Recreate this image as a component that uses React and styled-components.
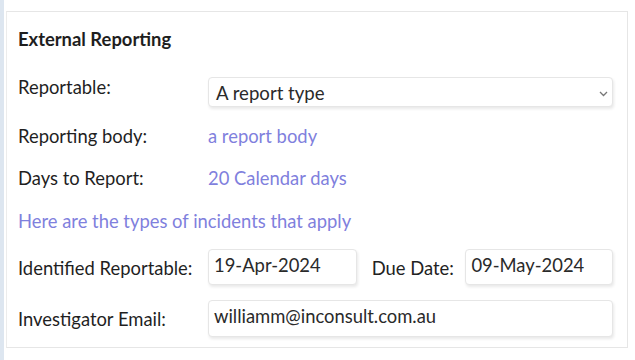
import React from 'react'
import styled, { createGlobalStyle } from 'styled-components'

const GlobalStyle = createGlobalStyle`
  html, body {
    margin: 0;
    padding: 0;
    background: #ffffff;
  }
  body {
    font-family: Lato, "Open Sans", sans-serif;
    color: #222222;
  }
`

const Page = styled.div`
  display: flex;
  width: 635px;
  height: 360px;
  overflow: hidden;
`

const SideStrip = styled.div`
  width: 4px;
  flex: none;
  background: #dde6f0;
`

const Panel = styled.section`
  box-sizing: border-box;
  width: 622px;
  height: 337px;
  margin: 11px 0 0 2px;
  padding: 17px 14px 0 11px;
  border: 1px solid #e6e6e6;
  border-left-color: #ececec;
`

const Heading = styled.h3`
  margin: 0 0 28px;
  font-size: 18.4px;
  line-height: 20px;
  font-weight: 700;
  color: #1e1e1e;
`

const Row = styled.div`
  display: flex;
  align-items: flex-start;
  height: ${p => p.h}px;
`

const Label = styled.div`
  width: 190px;
  flex: none;
  padding-top: ${p => p.top || 0}px;
  font-size: 18.4px;
  line-height: 20px;
  color: #1f1f1f;
`

const Value = styled.div`
  padding-top: ${p => p.top || 0}px;
  font-size: 18.4px;
  line-height: 20px;
  color: #7f80dd;
`

const Note = styled.div`
  padding-top: 8px;
  font-size: 18.4px;
  line-height: 20px;
  color: #7f80dd;
`

const SelectBox = styled.div`
  box-sizing: border-box;
  width: 406px;
  height: 30px;
  display: flex;
  align-items: center;
  justify-content: space-between;
  padding: 1px 4px 0 7px;
  border: 1px solid #e6e6e6;
  border-radius: 4px;
  box-shadow: 1px 2px 3px rgba(0, 0, 0, 0.09);
  font-size: 18.6px;
  color: #2a2a2a;
  background: #fff;
`

const Chevron = styled.svg`
  width: 9px;
  height: 6px;
  margin-top: 2px;
`

const Field = styled.div`
  box-sizing: border-box;
  width: ${p => p.w}px;
  height: ${p => p.h || 36}px;
  padding: 5px 5px 0 5px;
  border: 1px solid #e6e6e6;
  border-radius: 4px;
  box-shadow: 1px 2px 3px rgba(0, 0, 0, 0.09);
  font-size: 18.4px;
  line-height: 20px;
  color: #2a2a2a;
  background: #fff;
`

const InlineLabel = styled.div`
  padding: 9px 0 0 15px;
  width: 109px;
  box-sizing: border-box;
  font-size: 18.4px;
  line-height: 20px;
`

export default function App() {
  return (
    <>
      <GlobalStyle />
      <Page>
        <SideStrip />
        <Panel>
          <Heading>External Reporting</Heading>
          <Row h={40}>
            <Label top={0}>Reportable:</Label>
            <SelectBox>
              <span>A report type</span>
              <Chevron viewBox="0 0 9 6">
                <path d="M1 1l3.5 3.5L8 1" fill="none" stroke="#777" strokeWidth="1.3" />
              </Chevron>
            </SelectBox>
          </Row>
          <Row h={44}>
            <Label top={9}>Reporting body:</Label>
            <Value top={9}>a report body</Value>
          </Row>
          <Row h={42}>
            <Label top={7}>Days to Report:</Label>
            <Value top={7}>20 Calendar days</Value>
          </Row>
          <Row h={46}>
            <Note>Here are the types of incidents that apply</Note>
          </Row>
          <Row h={51}>
            <Label top={9}>Identified Reportable:</Label>
            <Field w={149}>19-Apr-2024</Field>
            <InlineLabel>Due Date:</InlineLabel>
            <Field w={148}>09-May-2024</Field>
          </Row>
          <Row h={40}>
            <Label top={9}>Investigator Email:</Label>
            <Field w={406} h={37}>williamm@inconsult.com.au</Field>
          </Row>
        </Panel>
      </Page>
    </>
  )
}
